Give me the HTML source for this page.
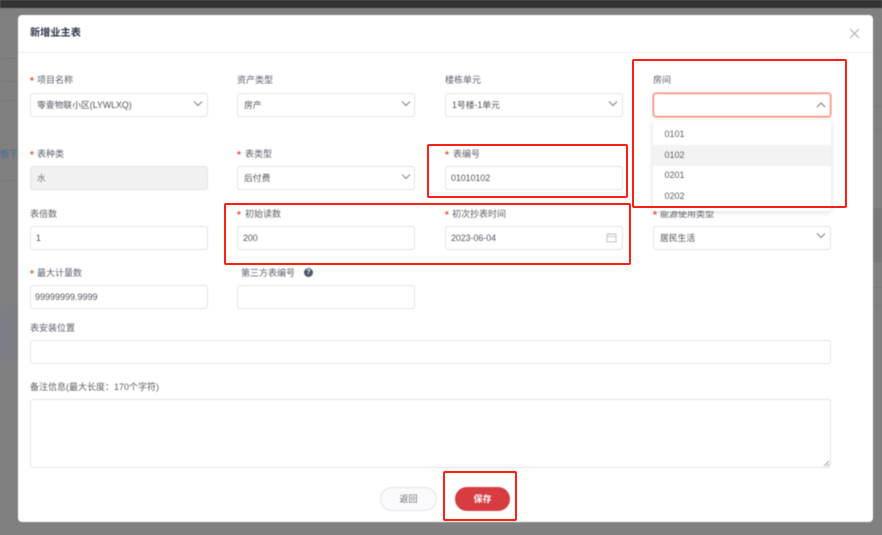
<!DOCTYPE html>
<html><head><meta charset="utf-8">
<style>
html,body{margin:0;padding:0}
body{width:882px;height:535px;overflow:hidden;position:relative;background:#808080;font-family:"Liberation Sans","Noto Sans CJK SC",sans-serif;font-size:9px;color:#5f6270}
div,span{position:absolute;box-sizing:border-box;white-space:nowrap}
#w{left:0;top:0;width:882px;height:535px;overflow:hidden;filter:blur(.4px)}
.top{left:0;top:0;width:882px;height:8px;background:#333}
.bl{background:#777;height:1px}
.modal{left:18px;top:15px;width:855px;height:507px;background:#fff;border-radius:4px}
.hline{left:18px;top:52px;width:855px;height:1px;background:#ececec}
.title{left:30px;top:25px;font-size:10.2px;font-weight:700;color:#2f364a;line-height:15px}
.lb{font-size:9px;line-height:14px;color:#5c606c;margin-top:1px}
.st{color:#ee4a2c;font-size:10px;line-height:14px;margin-top:3px;font-weight:700}
.in{height:24px;background:#fff;border:1px solid #e3e3e7;border-radius:3px;font-size:8.8px;line-height:23px;color:#50545f;padding-left:5px}
.se{padding-left:6px}
.rb{border:2px solid #fb1f14;border-radius:2px}
.opt{left:653px;width:178px;height:21px;line-height:21px;padding-left:11.500px;font-size:9px;color:#5c6170}
</style></head><body>
<div id="w">
<div class="top"></div>
<div class="bl" style="left:0;top:58px;width:18px"></div>
<div class="bl" style="left:0;top:81px;width:18px"></div>
<div class="bl" style="left:0;top:100px;width:18px"></div>
<div class="bl" style="left:0;top:180px;width:18px"></div>
<div style="left:0;top:305px;width:18px;height:55px;background:#7b7e84"></div>
<div style="left:-9px;top:147px;font-size:9px;line-height:14px;color:#3f6ea0;width:27px;overflow:hidden">模板下</div>
<div class="bl" style="left:873px;top:106px;width:9px"></div>
<div class="bl" style="left:873px;top:129px;width:9px"></div>
<div style="left:873px;top:208px;width:9px;height:54px;background:#777"></div>
<div class="bl" style="left:873px;top:287px;width:9px"></div>
<div class="bl" style="left:873px;top:305px;width:9px"></div>
<div class="modal"></div>
<div class="hline"></div>
<div class="title" style="margin-top:1px">新增业主表</div>
<svg style="position:absolute;left:849px;top:28px" width="11" height="11" viewBox="0 0 11 11"><path d="M1 1L10 10M10 1L1 10" stroke="#aaa" stroke-width="1" fill="none"/></svg>

<span class="st" style="left:30px;top:72px">*</span><div class="lb" style="left:37px;top:72px">项目名称</div>
<div class="lb" style="left:237px;top:72px">资产类型</div>
<div class="lb" style="left:445px;top:72px">楼栋单元</div>
<div class="lb" style="left:653px;top:72px">房间</div>

<div class="in se" style="left:30px;top:93px;width:178px">零壹物联小区(LYWLXQ)</div>
<div class="in se" style="left:237px;top:93px;width:178px">房产</div>
<div class="in se" style="left:445px;top:93px;width:178px">1号楼-1单元</div>
<div class="in" style="left:653px;top:93px;width:178px;height:24px;border:1px solid #f5745a;box-shadow:0 0 0 1px #fbd3c9"></div>
<svg style="position:absolute;left:192px;top:100px" width="12" height="8" viewBox="0 0 12 8"><path d="M2 1.500L6 5.500L10 1.500" stroke="#7f8492" stroke-width="1.100" fill="none"/></svg>
<svg style="position:absolute;left:400px;top:100px" width="12" height="8" viewBox="0 0 12 8"><path d="M2 1.500L6 5.500L10 1.500" stroke="#7f8492" stroke-width="1.100" fill="none"/></svg>
<svg style="position:absolute;left:607px;top:100px" width="12" height="8" viewBox="0 0 12 8"><path d="M2 1.500L6 5.500L10 1.500" stroke="#7f8492" stroke-width="1.100" fill="none"/></svg>
<svg style="position:absolute;left:815px;top:101px" width="12" height="8" viewBox="0 0 12 8"><path d="M2 6L6 2L10 6" stroke="#7f8492" stroke-width="1.200" fill="none"/></svg>

<span class="st" style="left:30px;top:146px">*</span><div class="lb" style="left:37px;top:146px">表种类</div>
<span class="st" style="left:237px;top:146px">*</span><div class="lb" style="left:245px;top:146px">表类型</div>
<span class="st" style="left:445px;top:146px">*</span><div class="lb" style="left:453px;top:146px">表编号</div>

<div class="in se" style="left:30px;top:166px;width:178px;background:#f1f1f2;color:#777">水</div>
<div class="in se" style="left:237px;top:166px;width:178px">后付费</div>
<div class="in" style="left:445px;top:166px;width:178px">01010102</div>
<svg style="position:absolute;left:400px;top:173px" width="12" height="8" viewBox="0 0 12 8"><path d="M2 1.500L6 5.500L10 1.500" stroke="#7f8492" stroke-width="1.100" fill="none"/></svg>

<div class="lb" style="left:30px;top:206px">表倍数</div>
<span class="st" style="left:237px;top:206px">*</span><div class="lb" style="left:245px;top:206px">初始读数</div>
<span class="st" style="left:445px;top:206px">*</span><div class="lb" style="left:452px;top:206px">初次抄表时间</div>
<span class="st" style="left:653px;top:206px">*</span><div class="lb" style="left:660px;top:206px">能源使用类型</div>

<div class="in" style="left:30px;top:226px;width:178px">1</div>
<div class="in" style="left:237px;top:226px;width:178px">200</div>
<div class="in" style="left:445px;top:226px;width:178px">2023-06-04</div>
<div class="in se" style="left:653px;top:226px;width:178px">居民生活</div>
<svg style="position:absolute;left:606px;top:232px" width="11" height="11" viewBox="0 0 11 11"><path d="M1 2H10V10H1ZM1 4.500H10M3 1V3M8 1V3" stroke="#c4c6cc" stroke-width="1" fill="none"/></svg>
<svg style="position:absolute;left:815px;top:232px" width="12" height="8" viewBox="0 0 12 8"><path d="M2 1.500L6 5.500L10 1.500" stroke="#7f8492" stroke-width="1.100" fill="none"/></svg>

<span class="st" style="left:30px;top:265px">*</span><div class="lb" style="left:37px;top:265px">最大计量数</div>
<div class="lb" style="left:241px;top:265px">第三方表编号</div>
<div style="left:304px;top:268px;width:9px;height:9px;border-radius:50%;background:#4d566c;color:#fff;font-size:7px;line-height:9px;text-align:center;font-weight:700">?</div>

<div class="in" style="left:30px;top:285px;width:178px;padding-left:4px;font-size:9px">99999999.9999</div>
<div class="in" style="left:237px;top:285px;width:178px"></div>

<div class="lb" style="left:30px;top:320px">表安装位置</div>
<div class="in" style="left:30px;top:340px;width:801px"></div>

<div class="lb" style="left:30px;top:379px">备注信息(最大长度：170个字符)</div>
<div class="in" style="left:30px;top:399px;width:801px;height:69px"></div>
<svg style="position:absolute;left:823px;top:460px" width="7" height="7" viewBox="0 0 7 7"><path d="M1 6L6 1M4 6L6 4" stroke="#888" stroke-width="0.800" fill="none"/></svg>

<div style="left:380px;top:487px;width:57px;height:24px;border:1px solid #e4e2ea;border-radius:12px;background:#faf9fc;text-align:center;line-height:22px;font-size:9px;color:#6d6d6d">返回</div>
<div style="left:455px;top:487px;width:55px;height:24px;border-radius:12px;background:#d63c40;text-align:center;line-height:24px;font-size:9px;color:#fff;font-weight:700">保存</div>

<div style="left:653px;top:120px;width:178px;height:91px;background:#fff;border-radius:3px;box-shadow:0 1px 6px rgba(0,0,0,.15)"></div>
<div class="opt" style="top:124px">0101</div>
<div class="opt" style="top:145px;background:#f3f3f4">0102</div>
<div class="opt" style="top:165px">0201</div>
<div class="opt" style="top:186px">0202</div>
</div>
<div class="rb" style="left:632px;top:59px;width:215px;height:149px"></div>
<div class="rb" style="left:427px;top:144px;width:201px;height:54px"></div>
<div class="rb" style="left:224px;top:203px;width:407px;height:62px"></div>
<div class="rb" style="left:443px;top:471px;width:74px;height:50px"></div>
</body></html>
